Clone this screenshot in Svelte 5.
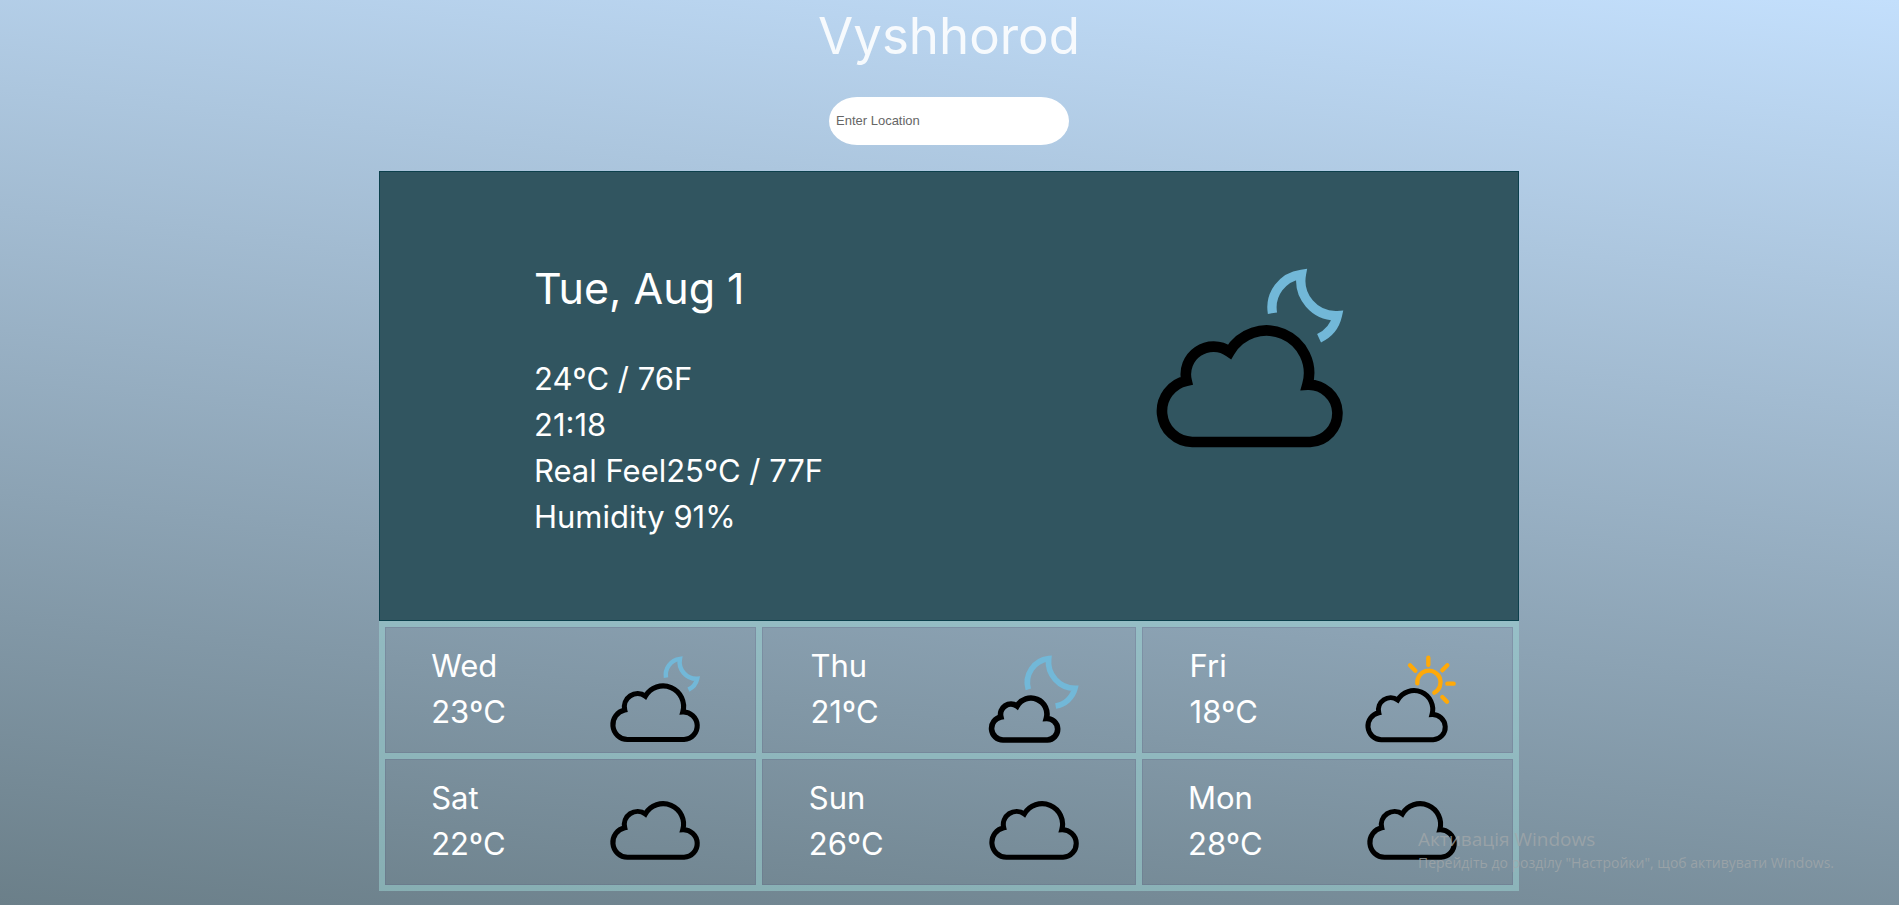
<script>
  let location = $state('');

  const city = 'Vyshhorod';
  const today = {
    date: 'Tue, Aug 1',
    lines: ['24ºC / 76F', '21:18', 'Real Feel25ºC / 77F', 'Humidity 91%']
  };
  const forecast = [
    { day: 'Wed', temp: '23ºC', icon: 'cloud-moon' },
    { day: 'Thu', temp: '21ºC', icon: 'big-moon' },
    { day: 'Fri', temp: '18ºC', icon: 'cloud-sun' },
    { day: 'Sat', temp: '22ºC', icon: 'cloud' },
    { day: 'Sun', temp: '26ºC', icon: 'cloud' },
    { day: 'Mon', temp: '28ºC', icon: 'cloud' }
  ];

  const cloud =
    'M186 580A93 93 0 0 1 169 396A83 83 0 0 1 298 309A128 128 0 0 1 532 408A86 86 0 1 1 540 580Z';
  const boxes = {
    'cloud-moon': '2 -123 700 787',
    'big-moon': '676 82 336 378',
    'cloud-sun': '701 82 336 378',
    cloud: '2 -34 700 787'
  };
</script>

{#snippet weatherIcon(name)}
  <svg class="icon" viewBox={boxes[name]} aria-hidden="true">
    {#if name === 'cloud-moon'}
      <path class="moon" stroke-width="28" d="M427 193A101 101 0 0 1 514 76A105 105 0 0 0 622 200A99 99 0 0 1 567 268" />
      <path class="cloud" stroke-width="32" d={cloud} />
    {:else if name === 'big-moon'}
      <path class="moon" stroke-width="17" d="M833 269A72 72 0 0 1 894 177A80 80 0 0 0 973 266A72 72 0 0 1 915 319" />
      <path class="cloud" stroke-width="45" transform="translate(687 203) scale(.376)" d={cloud} />
    {:else if name === 'cloud-sun'}
      <path class="sun" stroke-width="13" d="M894 251A35 35 0 1 1 945 279M927 174V196M969 212L984 197M984 252H1003M969 292L983 306M872 197L888 213" />
      <path class="cloud" stroke-width="34" transform="translate(704 165) scale(.44)" d={cloud} />
    {:else}
      <path class="cloud" stroke-width="32" d={cloud} />
    {/if}
  </svg>
{/snippet}

<div class="page">
  <header>
    <h1>{city}</h1>
    <input type="text" placeholder="Enter Location" aria-label="Enter Location" bind:value={location} />
  </header>

  <main>
    <section class="today">
      <div class="details">
        <h2>{today.date}</h2>
        {#each today.lines as line}
          <p>{line}</p>
        {/each}
      </div>
      <div class="today-icon">{@render weatherIcon('cloud-moon')}</div>
    </section>

    <section class="forecast">
      {#each forecast as item}
        <article>
          <div class="reading">
            <p>{item.day}</p>
            <p>{item.temp}</p>
          </div>
          <div class="day-icon">{@render weatherIcon(item.icon)}</div>
        </article>
      {/each}
    </section>
  </main>

  <aside class="watermark">
    <p class="notice">Активація Windows</p>
    <p>Перейдіть до розділу "Настройки", щоб активувати Windows.</p>
  </aside>
</div>

<style>
  :global(body) {
    margin: 0;
  }

  .page {
    box-sizing: border-box;
    min-height: 100vh;
    padding: 0 1px 14px 0;
    background: linear-gradient(186deg, #c3dffc, #6b7f89);
    color: #fff;
    font-family: Inter, sans-serif;
    font-size: 31px;
    line-height: 46px;
  }

  header {
    display: flex;
    flex-direction: column;
    align-items: center;
    gap: 25px;
    margin-bottom: 26px;
  }

  h1,
  h2,
  p {
    margin: 0;
    font-weight: 400;
  }

  h1 {
    color: rgba(255, 255, 255, 0.88);
    font-size: 51px;
    line-height: 72px;
  }

  input {
    box-sizing: border-box;
    width: 240px;
    height: 48px;
    padding: 0 7px 2px;
    border: 0;
    border-radius: 28px / 24px;
    background: #fff;
    color: #333;
    font-family: 'Liberation Sans', sans-serif;
    font-size: 13px;
  }

  input::placeholder {
    color: #666;
    opacity: 1;
  }

  main {
    width: calc(60% + 1px);
    margin: 0 auto;
  }

  .today {
    box-sizing: border-box;
    display: flex;
    align-items: center;
    justify-content: space-around;
    min-height: 450px;
    border: 1px solid #0c404c;
    background: #315560;
  }

  .details {
    padding-top: 6px;
  }

  h2 {
    margin-bottom: 38px;
    font-size: 43px;
    line-height: 60px;
  }

  .icon {
    display: block;
    width: 100%;
    height: 100%;
    fill: none;
  }

  .today-icon {
    width: 233px;
    height: 262px;
    margin-bottom: 114px;
  }

  .reading {
    padding-bottom: 2px;
  }

  .day-icon {
    width: 112px;
    height: 126px;
  }

  .cloud {
    stroke: #000;
  }

  .moon {
    stroke: #72b8d8;
  }

  .sun {
    stroke: #ffa908;
    stroke-linecap: round;
  }

  .forecast {
    --line: 6px solid rgba(160, 217, 216, 0.5);
    display: grid;
    grid-template-columns: 377fr 380fr 371fr;
    border: var(--line);
  }

  article {
    display: flex;
    align-items: center;
    justify-content: space-around;
    border-right: var(--line);
    border-bottom: var(--line);
    box-shadow: inset 0 0 0 1px rgba(90, 100, 130, 0.25);
  }

  article:nth-child(3n) {
    border-right: 0;
  }

  article:nth-child(n + 4) {
    border-bottom: 0;
  }

  .watermark {
    position: absolute;
    right: 65px;
    bottom: 31px;
    color: rgba(163, 168, 170, 0.75);
    font-family: 'Open Sans', sans-serif;
    font-size: 14px;
    line-height: 22px;
  }

  .notice {
    font-size: 19px;
    line-height: 26px;
  }
</style>
